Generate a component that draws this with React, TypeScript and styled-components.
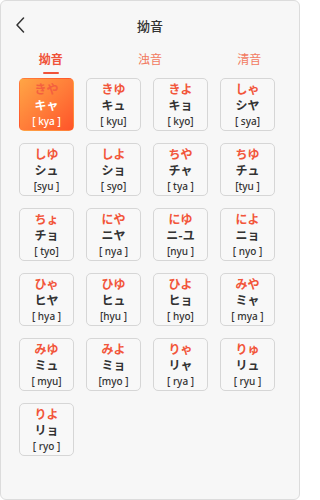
import React, { useState } from "react";
import styled, { createGlobalStyle } from "styled-components";

const GlobalStyle = createGlobalStyle`
  html, body {
    margin: 0;
    padding: 0;
    background: #ffffff;
  }
  * {
    box-sizing: border-box;
  }
`;

const Panel = styled.div`
  width: 300px;
  height: 500px;
  background: #f7f7f7;
  border: 1px solid #dcdcdc;
  border-radius: 6px;
  font-family: "Noto Sans CJK JP", "Noto Sans", sans-serif;
  overflow: hidden;
`;

const Header = styled.div`
  height: 46px;
  display: flex;
  align-items: center;
  justify-content: center;
  position: relative;
`;

const BackButton = styled.button`
  position: absolute;
  left: 11px;
  top: 15px;
  width: 16px;
  height: 18px;
  padding: 0;
  border: none;
  background: none;
  display: flex;
  align-items: center;
  justify-content: center;
`;

const Title = styled.div`
  font-size: 13px;
  font-weight: 500;
  color: #333;
  margin-top: 2px;
`;

const Tabs = styled.div`
  display: flex;
  height: 30px;
`;

const Tab = styled.div<{ $active?: boolean }>`
  flex: 1;
  display: flex;
  flex-direction: column;
  align-items: center;
  padding-top: 3px;
  font-size: 12px;
  font-weight: ${(p) => (p.$active ? 700 : 400)};
  color: ${(p) => (p.$active ? "#f0533a" : "#f27a60")};
  line-height: 17px;
  cursor: pointer;

  &::after {
    content: "";
    width: 16px;
    height: 2px;
    margin-top: 5px;
    border-radius: 1px;
    background: ${(p) => (p.$active ? "#f0533a" : "transparent")};
  }
`;

const Grid = styled.div`
  display: grid;
  grid-template-columns: repeat(4, 55px);
  grid-auto-rows: 53px;
  column-gap: 12px;
  row-gap: 12px;
  padding: 1px 0 0 18px;
`;

const Card = styled.div<{ $active?: boolean }>`
  border: 1px solid ${(p) => (p.$active ? "transparent" : "#d6d6d6")};
  border-radius: 5px;
  background: ${(p) =>
    p.$active
      ? "linear-gradient(135deg, #ffa545 0%, #ff7a38 55%, #ff5429 100%)"
      : "#f8f8f8"};
  display: flex;
  flex-direction: column;
  align-items: center;
  justify-content: center;
  padding-top: 1px;
`;

const Hira = styled.div<{ $active?: boolean }>`
  font-size: 12px;
  font-weight: 700;
  line-height: 16px;
  color: ${(p) => (p.$active ? "#f4603f" : "#f2553a")};
`;

const Kata = styled.div<{ $active?: boolean }>`
  font-size: 12px;
  font-weight: 700;
  line-height: 16px;
  color: ${(p) => (p.$active ? "#ffffff" : "#333333")};
`;

const Roma = styled.div<{ $active?: boolean }>`
  font-family: "Noto Sans", "Open Sans", sans-serif;
  font-size: 10px;
  font-weight: 500;
  line-height: 16px;
  white-space: pre;
  color: ${(p) => (p.$active ? "#ffffff" : "#333333")};
`;

const sounds: [string, string, string][] = [
  ["きや", "キャ", "[ kya ]"],
  ["きゆ", "キュ", "[ kyu]"],
  ["きよ", "キョ", "[ kyo]"],
  ["しゃ", "シヤ", "[ sya]"],
  ["しゆ", "シュ", "[syu ]"],
  ["しよ", "ショ", "[ syo]"],
  ["ちや", "チャ", "[ tya ]"],
  ["ちゆ", "チュ", "[tyu ]"],
  ["ちょ", "チョ", "[ tyo]"],
  ["にや", "ニヤ", "[ nya ]"],
  ["にゆ", "ニ-ユ", "[nyu ]"],
  ["によ", "ニョ", "[ nyo ]"],
  ["ひゃ", "ヒヤ", "[ hya ]"],
  ["ひゆ", "ヒュ", "[hyu ]"],
  ["ひよ", "ヒョ", "[ hyo]"],
  ["みや", "ミャ", "[ mya ]"],
  ["みゆ", "ミュ", "[ myu]"],
  ["みよ", "ミョ", "[myo ]"],
  ["りゃ", "リャ", "[ rya ]"],
  ["りゅ", "リュ", "[ ryu ]"],
  ["りよ", "リョ", "[ ryo ]"],
];

const tabs = ["拗音", "浊音", "清音"];

const App: React.FC = () => {
  const [tab, setTab] = useState(0);
  const [selected, setSelected] = useState(0);

  return (
    <Panel>
      <GlobalStyle />
      <Header>
        <BackButton aria-label="back">
          <svg width="10" height="16" viewBox="0 0 10 16" fill="none">
            <path
              d="M8.5 1 L2 8 L8.5 15"
              stroke="#333"
              strokeWidth="1.5"
              strokeLinecap="round"
              strokeLinejoin="round"
            />
          </svg>
        </BackButton>
        <Title>拗音</Title>
      </Header>

      <Tabs>
        {tabs.map((t, i) => (
          <Tab key={t} $active={tab === i} onClick={() => setTab(i)}>
            {t}
          </Tab>
        ))}
      </Tabs>

      <Grid>
        {sounds.map(([hira, kata, roma], i) => (
          <Card
            key={i}
            $active={selected === i}
            onClick={() => setSelected(i)}
          >
            <Hira $active={selected === i}>{hira}</Hira>
            <Kata $active={selected === i}>{kata}</Kata>
            <Roma $active={selected === i}>{roma}</Roma>
          </Card>
        ))}
      </Grid>
    </Panel>
  );
};

export default App;
